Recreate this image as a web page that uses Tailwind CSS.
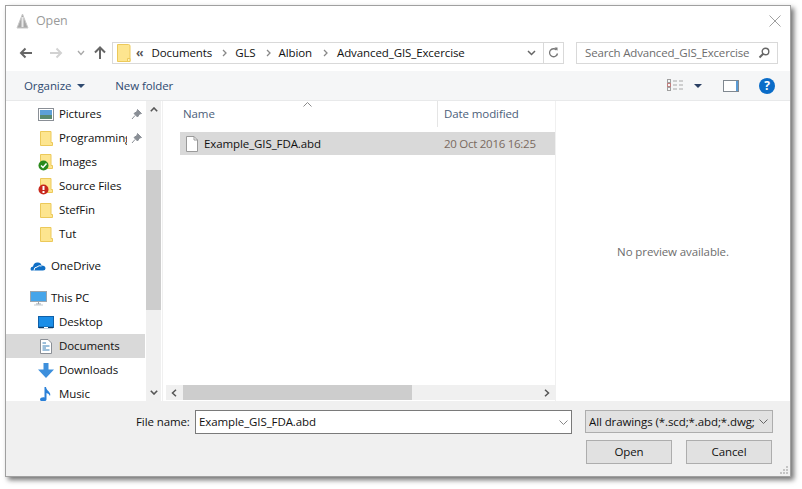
<!DOCTYPE html>
<html><head><meta charset="utf-8"><script src="https://cdn.jsdelivr.net/npm/@tailwindcss/browser@4"></script></head>
<body class="bg-white w-[802px] h-[489px] overflow-hidden">
<div class="ml-[5px] mt-[5px] w-[786px] h-[472px] border border-[#a0a0a0] shadow-[3px_3px_5px_rgba(0,0,0,0.55)] bg-white flex flex-col font-['Open_Sans',sans-serif] text-[11.5px] tracking-[-0.1px] text-[#111] overflow-hidden">
 <!-- title -->
 <div class="h-[29px] shrink-0 flex items-center pt-[1px] pl-[9px] pr-[9px]">
  <svg width="15" height="17" viewBox="0 0 15 17"><path d="M7.500 1 L13 15 H2 Z" fill="#a8a8a8" stroke="#c8c8c8"/><path d="M7.500 4V14" stroke="#e8e8e8" stroke-width="2"/></svg>
  <span class="ml-[6px] text-[#9a9a9a] text-[12.5px]">Open</span>
  <svg class="ml-auto" width="12" height="12" viewBox="0 0 12 12"><path d="M.5 .5L11.5 11.5M11.5 .5L.5 11.5" stroke="#a0a0a0" fill="none"/></svg>
 </div>
 <!-- nav -->
 <div class="h-[36px] shrink-0 flex items-center pl-[13px] relative">
  <svg width="14" height="12" viewBox="0 0 14 12"><path d="M13 6H2M6.5 1.500L2 6L6.500 10.500" stroke="#666" stroke-width="2" fill="none"/></svg>
  <svg class="ml-[16px]" width="14" height="12" viewBox="0 0 14 12"><path d="M1 6H12M7.500 1.500L12 6L7.500 10.500" stroke="#d2d2d2" stroke-width="2" fill="none"/></svg>
  <svg class="ml-[14px]" width="8" height="6" viewBox="0 0 8 6"><path d="M1 1L4 4.500L7 1" stroke="#a8a8a8" stroke-width="1.300" fill="none"/></svg>
  <svg class="ml-[9px]" width="12" height="14" viewBox="0 0 12 14"><path d="M6 13V2M1 6.500L6 1.500L11 6.500" stroke="#666" stroke-width="2" fill="none"/></svg>
  <div class="ml-[6px] w-[452px] h-[22px] border border-[#d9d9d9] flex items-center pl-[4px]">
   <svg width="14" height="18" viewBox="0 0 14 18"><path d="M.5 .5H11.500Q13 .5 13 2V17.500H.5Z" fill="#fde58f" stroke="#ecc95a"/><path d="M10.500 14.500H13V17.500H10.500Z" fill="#fff2b8" stroke="#ecc95a"/></svg>
   <span class="ml-[5px] text-[#555] font-bold tracking-[-1px]">‹‹</span>
   <span class="ml-[9px]">Documents</span>
   <svg class="ml-[10px]" width="5" height="8" viewBox="0 0 5 8"><path d="M1 1L4 4L1 7" stroke="#888" stroke-width="1.300" fill="none"/></svg>
   <span class="ml-[8px]">GLS</span>
   <svg class="ml-[10px]" width="5" height="8" viewBox="0 0 5 8"><path d="M1 1L4 4L1 7" stroke="#888" stroke-width="1.300" fill="none"/></svg>
   <span class="ml-[8px]">Albion</span>
   <svg class="ml-[11px]" width="5" height="8" viewBox="0 0 5 8"><path d="M1 1L4 4L1 7" stroke="#888" stroke-width="1.300" fill="none"/></svg>
   <span class="ml-[9px]">Advanced_GIS_Excercise</span>
   <svg class="ml-auto mr-[7px]" width="9" height="6" viewBox="0 0 9 6"><path d="M1 1L4.500 4.500L8 1" stroke="#666" stroke-width="1.500" fill="none"/></svg>
   <div class="w-[20px] h-full border-l border-[#d9d9d9] flex items-center justify-center">
    <svg width="11" height="12" viewBox="0 0 11 12"><path d="M8.500 3A4 4 0 1 0 9.500 6.500" stroke="#777" stroke-width="1.300" fill="none"/><path d="M6.500 .5H9.500V3.700Z" fill="#777"/></svg>
   </div>
  </div>
  <div class="ml-[12px] w-[202px] h-[22px] border border-[#d9d9d9] flex items-center pl-[8px] text-[#6d6d6d] whitespace-nowrap">
   <span class="tracking-[-0.17px]">Search Advanced_GIS_Excercise</span>
   <svg class="ml-auto mr-[7px]" width="12" height="12" viewBox="0 0 12 12"><circle cx="7.500" cy="4.500" r="3.300" stroke="#666" stroke-width="1.400" fill="none"/><path d="M5 7L1.500 10.500" stroke="#666" stroke-width="2"/></svg>
  </div>
 </div>
 <!-- toolbar -->
 <div class="h-[30px] shrink-0 bg-[#f5f6f7] border-b border-[#e8e9ea] flex items-center pl-[18px] text-[#2f4a70]">
  <span>Organize</span>
  <svg class="ml-[6px]" width="8" height="4" viewBox="0 0 8 4"><path d="M0 0H8L4 4Z" fill="#2f4a70"/></svg>
  <span class="ml-[30px]">New folder</span>
  <svg class="ml-auto" width="17" height="13" viewBox="0 0 17 13" fill="none"><rect x=".5" y=".5" width="3" height="3" stroke="#a0a0a0"/><rect x=".5" y="4.500" width="3" height="3" stroke="#c08080"/><rect x=".5" y="8.500" width="3" height="3" stroke="#a0a0a0"/><path d="M6 2H10M12 2H16M6 6H10M12 6H16M6 10H10M12 10H16" stroke="#a8a8a8"/></svg>
  <svg class="ml-[10px]" width="8" height="4" viewBox="0 0 8 4"><path d="M0 0H8L4 4Z" fill="#2a3f63"/></svg>
  <svg class="ml-[21px]" width="16" height="12" viewBox="0 0 16 12" fill="none"><rect x=".5" y=".5" width="15" height="11" stroke="#808890" fill="#fff"/><rect x="13" y="1" width="2" height="10" fill="#5a9bd5"/></svg>
  <div class="ml-[20px] mr-[15px] w-[16px] h-[16px] rounded-full bg-[#0a6cc8] text-white font-bold text-[12px] leading-[16px] text-center">?</div>
 </div>
 <!-- main -->
 <div class="h-[300px] shrink-0 flex overflow-hidden">
  <div class="w-[139px] shrink-0 h-full overflow-hidden pt-[1px]">
   <div class="h-[24px] flex items-center pl-[32px]"><svg class="shrink-0" width="16" height="13" viewBox="0 0 16 13"><rect x=".5" y=".5" width="15" height="12" fill="#fff" stroke="#8a8f96"/><rect x="2" y="2" width="12" height="5" fill="#5da0d8"/><rect x="2" y="7" width="12" height="4" fill="#5a8a70"/></svg><span class="ml-[5px]">Pictures</span><svg class="ml-auto mr-[3px] shrink-0" width="11" height="11" viewBox="0 0 11 11"><path d="M6.500 .5L10.500 4.500L8.500 5L6.500 8L3 4.500L6 2.500ZM4 6.500L1 10" fill="#8a8f96" stroke="#8a8f96"/></svg></div>
   <div class="h-[24px] flex items-center pl-[34px]"><svg class="shrink-0" width="13" height="15" viewBox="0 0 13 15"><path d="M.5 .5H11V11.500H12.500V14.500H.5Z" fill="#fde58f" stroke="#ecc95a"/></svg><span class="ml-[6px] w-[68px] overflow-hidden whitespace-nowrap">Programming</span><svg class="ml-auto mr-[3px] shrink-0" width="11" height="11" viewBox="0 0 11 11"><path d="M6.500 .5L10.500 4.500L8.500 5L6.500 8L3 4.500L6 2.500ZM4 6.500L1 10" fill="#8a8f96" stroke="#8a8f96"/></svg></div>
   <div class="h-[24px] flex items-center pl-[32px]"><svg class="shrink-0" width="15" height="17" viewBox="0 0 15 17"><path d="M2.500 .5H13V11.500H14.500V14.500H2.500Z" fill="#fde58f" stroke="#ecc95a"/><circle cx="5.500" cy="11.500" r="5" fill="#2a8a1c"/><path d="M3 11.500L5 13.500L8.500 9.500" stroke="#fff" stroke-width="1.500" fill="none"/></svg><span class="ml-[6px]">Images</span></div>
   <div class="h-[24px] flex items-center pl-[32px]"><svg class="shrink-0" width="15" height="17" viewBox="0 0 15 17"><path d="M2.500 .5H13V11.500H14.500V14.500H2.500Z" fill="#fde58f" stroke="#ecc95a"/><circle cx="5.500" cy="11.500" r="5" fill="#c8281c"/><path d="M5.500 8V12" stroke="#fff" stroke-width="2"/><path d="M5.500 13V15" stroke="#fff" stroke-width="2"/></svg><span class="ml-[6px]">Source Files</span></div>
   <div class="h-[24px] flex items-center pl-[34px]"><svg class="shrink-0" width="13" height="15" viewBox="0 0 13 15"><path d="M.5 .5H11V11.500H12.500V14.500H.5Z" fill="#fde58f" stroke="#ecc95a"/></svg><span class="ml-[6px]">StefFin</span></div>
   <div class="h-[24px] flex items-center pl-[34px]"><svg class="shrink-0" width="13" height="15" viewBox="0 0 13 15"><path d="M.5 .5H11V11.500H12.500V14.500H.5Z" fill="#fde58f" stroke="#ecc95a"/></svg><span class="ml-[6px]">Tut</span></div>
   <div class="h-[24px] mt-[8px] flex items-center pl-[24px]"><svg class="shrink-0" width="16" height="10" viewBox="0 0 16 10"><path d="M1 9.500Q-.5 6 3 5.500Q4 1 8 1.500Q11 1.500 11.500 4.500Q15.500 4.500 15.500 7.500Q15.500 9.500 13 9.500Z" fill="#0f6fc6"/><path d="M4 9.500Q4 6 7 6Q9 4 11.500 5" stroke="#fff" fill="none"/></svg><span class="ml-[5px]">OneDrive</span></div>
   <div class="h-[24px] mt-[8px] flex items-center pl-[24px]"><svg class="shrink-0" width="17" height="15" viewBox="0 0 17 15"><rect x=".5" y=".5" width="16" height="10" fill="#45a5ea" stroke="#9aa5ae"/><path d="M6 13H11M8.500 11V13" stroke="#9aa5ae"/><path d="M4 14H13" stroke="#c4cbd0"/></svg><span class="ml-[4px]">This PC</span></div>
   <div class="h-[24px] flex items-center pl-[32px]"><svg class="shrink-0" width="16" height="13" viewBox="0 0 16 13"><rect x=".5" y=".5" width="15" height="11" fill="#1a8ee8" stroke="#1060a8"/><path d="M1 11.500H15" stroke="#0a3a68" stroke-width="1.500"/><path d="M6 11.500H10" stroke="#fff"/></svg><span class="ml-[5px]">Desktop</span></div>
   <div class="h-[24px] flex items-center pl-[34px] bg-[#d9d9d9]"><svg class="shrink-0" width="12" height="15" viewBox="0 0 12 15"><path d="M.5 .5H8L11.500 4V14.500H.5Z" fill="#fff" stroke="#8a8f96"/><path d="M2.500 4H6M2.500 7H9.500M2.500 9H6M2.500 11H9.500" stroke="#3a80b8"/></svg><span class="ml-[7px]">Documents</span></div>
   <div class="h-[24px] flex items-center pl-[32px]"><svg class="shrink-0" width="16" height="15" viewBox="0 0 16 15"><path d="M5.500 0H10.500V6.500H16L8 15L0 6.500H5.500Z" fill="#3d8fdc"/></svg><span class="ml-[5px]">Downloads</span></div>
   <div class="h-[24px] flex items-center pl-[34px]"><svg class="shrink-0" width="12" height="15" viewBox="0 0 12 15"><path d="M4.500 0H6C6.500 4 11.500 5 10 9Q9 6.500 6.500 6V12.500C6.500 15 0 15.500 0 12.500C0 10.500 3 10 4.500 10.500Z" fill="#2a80d8"/></svg><span class="ml-[7px]">Music</span></div>
  </div>
  <!-- sidebar scrollbar -->
  <div class="ml-[1px] w-[15px] shrink-0 bg-[#f0f0f0] flex flex-col items-center">
   <div class="h-[17px] flex items-center"><svg width="8" height="5" viewBox="0 0 8 5"><path d="M.8 4.200L4 1L7.200 4.200" stroke="#555" stroke-width="1.600" fill="none"/></svg></div>
   <div class="h-[52px] shrink-0"></div>
   <div class="w-full h-[140px] shrink-0 bg-[#cdcdcd]"></div>
   <div class="mt-auto h-[17px] flex items-center"><svg width="8" height="5" viewBox="0 0 8 5"><path d="M.8 .8L4 4L7.200 .8" stroke="#555" stroke-width="1.600" fill="none"/></svg></div>
  </div>
  <div class="w-[1px] shrink-0"></div>
  <!-- list -->
  <div class="w-[393px] shrink-0 flex flex-col relative border-l border-[#f0f0f0]">
   <svg class="absolute left-[140px] top-[1px]" width="9" height="5" viewBox="0 0 9 5"><path d="M.5 4.500L4.500 .5L8.500 4.500" stroke="#8a8a8a" fill="none"/></svg>
   <div class="h-[26px] shrink-0 flex items-center text-[#4c607a]">
    <span class="ml-[20px] w-[254px] h-full flex items-center">Name</span>
    <div class="w-[118px] h-full border-l border-[#e5e5e5] pl-[6px] flex items-center">Date modified</div>
   </div>
   <div class="ml-[17px] mt-[5px] w-[375px] h-[23px] shrink-0 bg-[#d9d9d9] flex items-center pl-[6px]">
    <svg width="12" height="16" viewBox="0 0 12 16"><path d="M.5 .5H8L11.500 4V15.500H.5Z" fill="#fff" stroke="#9a9a9a"/><path d="M8 .5V4H11.500" fill="none" stroke="#9a9a9a"/></svg>
    <span class="ml-[6px] w-[240px]">Example_GIS_FDA.abd</span>
    <span class="text-[#7a6a60] tracking-[-0.27px]">20 Oct 2016 16:25</span>
   </div>
   <div class="mt-auto mb-[1px] ml-[3px] w-[389px] h-[15px] shrink-0 bg-[#f0f0f0] flex items-center">
    <svg class="ml-[5px]" width="6" height="8" viewBox="0 0 6 8"><path d="M5 .8L1.500 4L5 7.200" stroke="#555" stroke-width="1.500" fill="none"/></svg>
    <div class="ml-[6px] w-[229px] h-full bg-[#cdcdcd]"></div>
    <svg class="ml-auto mr-[5px]" width="6" height="8" viewBox="0 0 6 8"><path d="M1 .8L4.500 4L1 7.200" stroke="#555" stroke-width="1.500" fill="none"/></svg>
   </div>
  </div>
  <!-- preview -->
  <div class="flex-1 flex items-center justify-center text-[#6d6d6d] pt-[2px] border-l border-[#f0f0f0]">No preview available.</div>
 </div>
 <!-- bottom -->
 <div class="flex-1 bg-[#f0f0f0] pt-[9px] relative">
  <div class="flex items-start">
   <span class="ml-[130px] w-[59px] h-[24px] leading-[24px]">File name:</span>
   <div class="w-[377px] h-[24px] bg-white border border-[#7a7a7a] flex items-center pl-[3px]">
    <span>Example_GIS_FDA.abd</span>
    <svg class="ml-auto mr-[3px]" width="9" height="5" viewBox="0 0 9 5"><path d="M.5 .5L4.500 4.500L8.500 .5" stroke="#888" fill="none"/></svg>
   </div>
   <div class="ml-[13px] w-[188px] h-[23px] bg-[#e1e1e1] border border-[#adadad] flex items-center pl-[3px]">
    <span class="w-[166px] overflow-hidden whitespace-nowrap">All drawings (*.scd;*.abd;*.dwg;*.dxf)</span>
    <svg class="ml-[4px]" width="9" height="5" viewBox="0 0 9 5"><path d="M.5 .5L4.500 4.500L8.500 .5" stroke="#666" fill="none"/></svg>
   </div>
  </div>
  <div class="flex mt-[6px] ml-[580px]">
   <div class="w-[86px] h-[24px] bg-[#e1e1e1] border border-[#adadad] flex items-center justify-center">Open</div>
   <div class="ml-[14px] w-[86px] h-[24px] bg-[#e1e1e1] border border-[#adadad] flex items-center justify-center">Cancel</div>
  </div>
  <svg class="absolute right-[1px] bottom-[1px]" width="9" height="9" viewBox="0 0 9 9" fill="#c4c4c4"><rect x="6" y="0" width="2" height="2"/><rect x="3" y="3" width="2" height="2"/><rect x="6" y="3" width="2" height="2"/><rect x="0" y="6" width="2" height="2"/><rect x="3" y="6" width="2" height="2"/><rect x="6" y="6" width="2" height="2"/></svg>
 </div>
</div>
</body></html>
